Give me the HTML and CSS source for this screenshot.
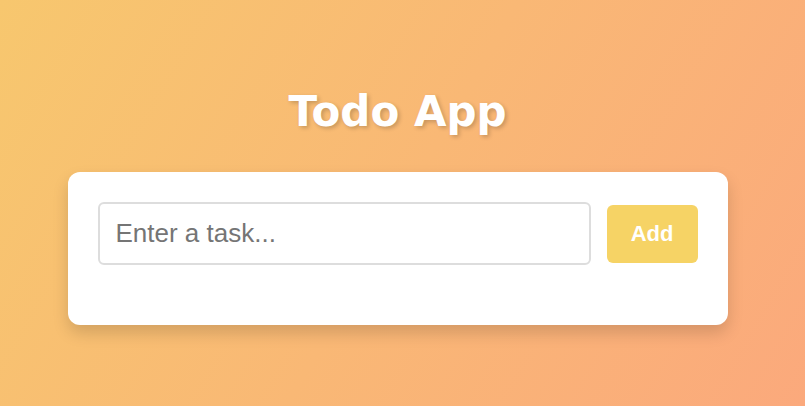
FILE: index.html
```html
<!DOCTYPE html>
<html lang="en">
<head>
<meta charset="utf-8">
<title>Todo App</title>
<link rel="stylesheet" href="styles.css">
</head>
<body>
  <main class="app">
    <h1 class="title">Todo App</h1>
    <section class="card">
      <form class="add-row">
        <input class="task-input" type="text" placeholder="Enter a task...">
        <button class="add-btn" type="button">Add</button>
      </form>
      <ul class="task-list"></ul>
    </section>
  </main>
</body>
</html>
```

FILE: styles.css
```css
html, body {
  height: 100%;
}
body {
  margin: 0;
  padding: 0 10px 0 0;
  box-sizing: border-box;
  background: linear-gradient(120deg, #f7c76e 0%, #fba97c 100%);
  font-family: "Liberation Sans", Arial, sans-serif;
  overflow: hidden;
}
.app {
  width: 660px;
  margin: 0 auto;
  padding-top: 87px;
}
.title {
  margin: 0 0 36px;
  text-align: center;
  color: #fff;
  font-family: "DejaVu Sans", sans-serif;
  font-weight: bold;
  font-size: 42px;
  line-height: 49px;
  text-shadow: 2px 2px 4px rgba(0, 0, 0, 0.2);
}
.card {
  background: #fff;
  border-radius: 12px;
  padding: 30px;
  box-shadow: 0 8px 16px rgba(0, 0, 0, 0.15);
}
.add-row {
  display: flex;
  align-items: center;
  gap: 16px;
  margin: 0 0 30px;
}
.task-input {
  flex: 1;
  min-width: 0;
  padding: 14px 16px;
  border: 2px solid #ddd;
  border-radius: 6px;
  font-family: "Liberation Sans", Arial, sans-serif;
  font-size: 26px;
  color: #333;
  outline: none;
}
.task-input::placeholder {
  color: #757575;
}
.add-btn {
  padding: 16px 24px;
  border: none;
  border-radius: 6px;
  background: #f6d365;
  color: #fff;
  font-family: "Liberation Sans", Arial, sans-serif;
  font-weight: bold;
  font-size: 22px;
  cursor: pointer;
}
.task-list {
  list-style: none;
  margin: 0;
  padding: 0;
}
```
